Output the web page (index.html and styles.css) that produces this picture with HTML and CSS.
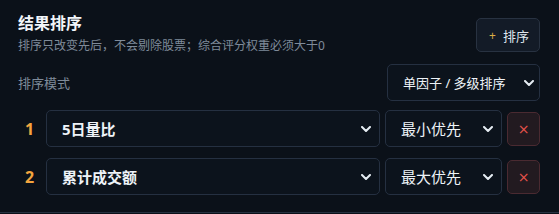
FILE: index.html
```html
<!DOCTYPE html>
<html lang="zh-CN">
<head>
<meta charset="utf-8">
<link rel="stylesheet" href="styles.css">
</head>
<body>
<section class="panel">
  <header class="head">
    <div class="head-text">
      <h2 class="title">结果排序</h2>
      <p class="sub">排序只改变先后，不会剔除股票；综合评分权重必须大于0</p>
    </div>
    <button class="add-btn"><span class="plus">+</span>排序</button>
  </header>
  <div class="mode-row">
    <span class="label">排序模式</span>
    <div class="select select-mode">
      <span>单因子 / 多级排序</span>
      <svg class="chev" viewBox="0 0 10 6" width="10" height="6"><path d="M1 1l4 4 4-4" fill="none" stroke="#e6edf3" stroke-width="2" stroke-linecap="round" stroke-linejoin="round"/></svg>
    </div>
  </div>
  <div class="rules">
    <div class="rule">
      <span class="idx">1</span>
      <div class="select bold">
        <span>5日量比</span>
        <svg class="chev" viewBox="0 0 10 6" width="10" height="6"><path d="M1 1l4 4 4-4" fill="none" stroke="#e6edf3" stroke-width="2" stroke-linecap="round" stroke-linejoin="round"/></svg>
      </div>
      <div class="select">
        <span>最小优先</span>
        <svg class="chev" viewBox="0 0 10 6" width="10" height="6"><path d="M1 1l4 4 4-4" fill="none" stroke="#e6edf3" stroke-width="2" stroke-linecap="round" stroke-linejoin="round"/></svg>
      </div>
      <button class="del">×</button>
    </div>
    <div class="rule">
      <span class="idx">2</span>
      <div class="select bold">
        <span>累计成交额</span>
        <svg class="chev" viewBox="0 0 10 6" width="10" height="6"><path d="M1 1l4 4 4-4" fill="none" stroke="#e6edf3" stroke-width="2" stroke-linecap="round" stroke-linejoin="round"/></svg>
      </div>
      <div class="select">
        <span>最大优先</span>
        <svg class="chev" viewBox="0 0 10 6" width="10" height="6"><path d="M1 1l4 4 4-4" fill="none" stroke="#e6edf3" stroke-width="2" stroke-linecap="round" stroke-linejoin="round"/></svg>
      </div>
      <button class="del">×</button>
    </div>
  </div>
</section>
</body>
</html>
```
FILE: styles.css
```css
html, body {
  margin: 0;
  padding: 0;
  background: #0b1119;
}
body {
  font-family: "Noto Sans", "Noto Sans CJK SC", sans-serif;
  color: #e6edf3;
  width: 559px;
  height: 214px;
  overflow: hidden;
}
.panel {
  padding: 12px 19px 17px 18px;
  border-bottom: 1px solid #263140;
}
.head {
  display: flex;
  justify-content: space-between;
  align-items: flex-start;
}
.title {
  margin: 0;
  font-size: 16px;
  line-height: 22px;
  font-weight: 700;
  color: #f3f6fa;
}
.sub {
  margin: 4px 0 0;
  font-size: 12px;
  line-height: 16px;
  color: #7f8b99;
}
.add-btn {
  margin-top: 6px;
  height: 34px;
  width: 64px;
  padding: 0 0 0 2px;
  display: flex;
  align-items: center;
  justify-content: center;
  background: #131b27;
  border: 1px solid #283241;
  border-radius: 5px;
  color: #dfe6ee;
  font-family: inherit;
  font-size: 13px;
}
.plus {
  color: #d9ad45;
  font-size: 12px;
  margin-right: 7px;
}
.mode-row {
  margin-top: 10px;
  display: flex;
  justify-content: space-between;
  align-items: center;
}
.label {
  font-size: 13px;
  color: #7f8b99;
}
.select {
  box-sizing: border-box;
  height: 37px;
  display: flex;
  align-items: center;
  justify-content: space-between;
  padding: 0 8px 0 15px;
  background: #0c131c;
  border: 1px solid #253041;
  border-radius: 5px;
  font-size: 15px;
  color: #eef3f8;
}
.select-mode {
  width: 153px;
  font-size: 13px;
  padding-right: 5px;
}
.select.bold {
  font-weight: 700;
}
.chev {
  flex: none;
}
.rules {
  margin-top: 9px;
  display: flex;
  flex-direction: column;
  gap: 11px;
}
.rule {
  display: grid;
  grid-template-columns: 23px 1fr 117px 33px;
  column-gap: 5px;
  align-items: center;
}
.idx {
  text-align: center;
  font-size: 16px;
  font-weight: 700;
  color: #f3a53e;
}
.del {
  box-sizing: border-box;
  height: 34px;
  width: 33px;
  padding: 0;
  background: #221a20;
  border: 1px solid #4a2a31;
  border-radius: 5px;
  color: #e5534b;
  font-family: "DejaVu Sans", sans-serif;
  font-size: 14px;
  line-height: 1;
}
```
